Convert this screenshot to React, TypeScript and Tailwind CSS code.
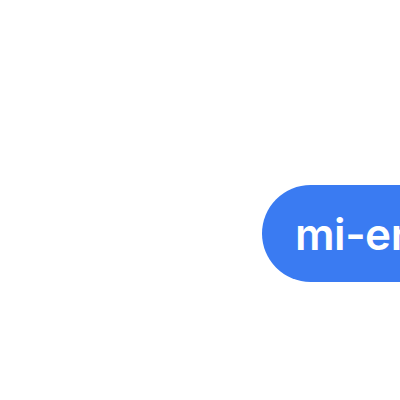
export default function App() {
  return (
    <div className="w-[400px] h-[400px] bg-white overflow-hidden flex pt-[185px] pl-[262px]">
      <div
        className="shrink-0 h-[97px] rounded-full bg-[#3a7bf2] pl-[33px] pr-[33px] flex items-center text-white text-[44px] font-semibold tracking-[-0.5px] whitespace-nowrap"
        style={{ fontFamily: 'Inter, "Liberation Sans", sans-serif' }}
      >
        mi-error
      </div>
    </div>
  );
}
